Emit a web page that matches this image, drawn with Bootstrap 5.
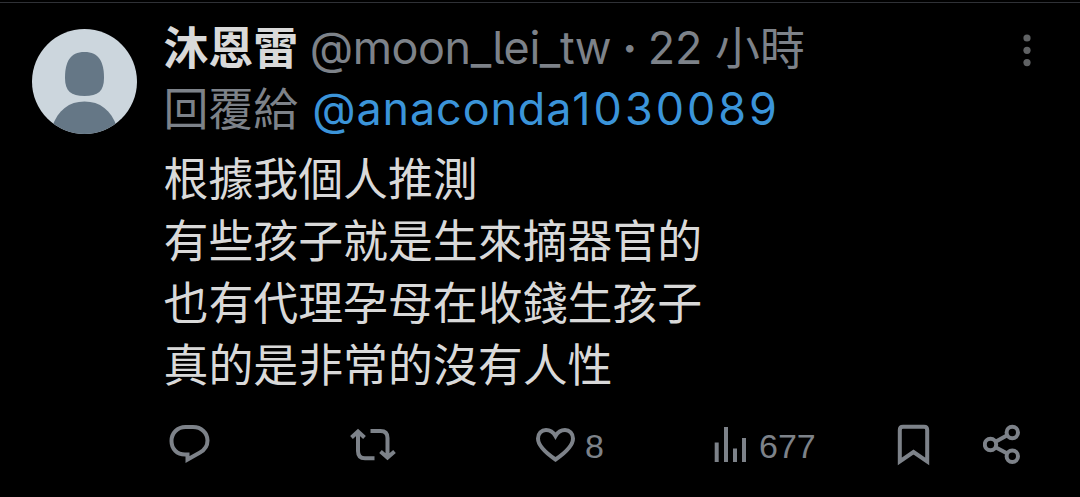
<!DOCTYPE html>
<html lang="zh-Hant">
<head>
  <meta charset="UTF-8">
  <title>沐恩雷</title>
  <meta name="viewport" content="width=device-width, initial-scale=1">
  <!-- Bootstrap CSS -->
  <link href="https://cdn.jsdelivr.net/npm/bootstrap@5.3.3/dist/css/bootstrap.min.css" rel="stylesheet">
  <style>
    body {
      background-color: #000;
      color: #d9d9d9;
      font-family: Inter, "Noto Sans CJK TC", sans-serif;
      font-size: 44.9px;
      overflow: hidden;
    }
    .post {
      height: 497px;
      padding: 15px 49px 0 32px;
      border-top: 1px solid #2f3136;
      margin-top: 2px;
    }
    .avatar {
      width: 105px;
      height: 105px;
      margin: 11px 26.5px 0 0;
    }
    .line {
      height: 61px;
      line-height: 61px;
      white-space: nowrap;
    }
    .grey {
      color: #7d8289;
    }
    .han {
      padding-top: 1px;
    }
    .handle {
      font-feature-settings: "cv05";
      letter-spacing: -0.4px;
      margin-left: 11.500px;
    }
    .dot {
      margin: 0 10.5px 0 11px;
    }
    .reply-to {
      color: #3b94d9;
      text-decoration: none;
      letter-spacing: 0.9px;
      margin-left: 14px;
    }
    .digits {
      letter-spacing: 3px;
    }
    .more {
      margin-top: 16px;
    }
    .post-text {
      line-height: 62px;
      margin-top: 9px;
    }
    .action {
      height: 44px;
      color: #7d8289;
      font: 34px/46px "Liberation Sans", sans-serif;
    }
    .action svg {
      fill: none;
      stroke: currentColor;
      stroke-width: 4;
    }
    .actions {
      margin: 26px 0 0 0.5px;
    }
    .like {
      width: 178px;
    }
    .views {
      width: 183px;
    }
  </style>
</head>
<body>

  <article class="post d-flex align-items-start">
    <svg class="avatar flex-shrink-0 rounded-circle" viewBox="0 0 105 105">
      <rect width="105" height="105" fill="#ccd6dd"/>
      <path d="M52.500 23C67 23 72 33 72 49C72 62 66 67 52.500 67C39 67 33 62 33 49C33 33 38 23 52.500 23Z" fill="#657786"/>
      <path d="M20 98C26 81 37 72.500 52.500 72.500S79 81 85 98V105H20Z" fill="#657786"/>
    </svg>

    <div class="flex-grow-1">
      <div class="d-flex justify-content-between">
        <div class="line d-flex">
          <span class="han fw-bold">沐恩雷</span>
          <span class="handle grey">@moon_lei_tw</span>
          <span class="dot grey fw-bold">·</span>
          <span class="grey">22</span>
          <span class="han grey">&nbsp;小時</span>
        </div>
        <svg class="more" width="8" height="34" fill="#606264">
          <circle cx="4" cy="4" r="3.600"/>
          <circle cx="4" cy="16.300" r="3.600"/>
          <circle cx="4" cy="28.600" r="3.600"/>
        </svg>
      </div>
      <div class="line d-flex">
        <span class="han grey">回覆給</span>
        <a class="reply-to" href="#">@anaconda<span class="digits">1030089</span></a>
      </div>

      <div class="post-text">
        根據我個人推測<br>
        有些孩子就是生來摘器官的<br>
        也有代理孕母在收錢生孩子<br>
        真的是非常的沒有人性
      </div>

      <!-- Actions -->
      <div class="actions d-flex">
        <div class="action d-flex">
          <svg width="186" height="44" viewBox="164 423 186 44">
            <path d="M187.500 454.500H185C177 454.500 171.500 449 171.500 441C171.500 433 177.500 427 185.500 427H193C201.500 427 207.500 433 207.500 440.500C207.500 446 204.500 450 200 452.500L187.500 459.500Z"/>
          </svg>
        </div>
        <div class="action d-flex">
          <svg width="186" height="44" viewBox="350 423 186 44">
            <path d="M351.500 437.500L358 431.500L364.500 437.500M358 432V451Q358 458.300 365 458.300H374.500M370.500 431H380.500Q387.500 431 387.500 438V457M380.500 451.500L387.500 457.500L394.500 451.500"/>
          </svg>
        </div>
        <div class="action like d-flex">
          <svg width="49" height="44" viewBox="536 423 49 44">
            <path d="M555.500 459.500C546 453 538 446 538 438.500C538 433.500 541.500 430 546 430C550.500 430 553.500 432.500 555.500 436C557.500 432.500 560.500 430 565 430C569.500 430 573 433.500 573 438.500C573 446 565 453 555.500 459.500Z"/>
          </svg>
          <span>8</span>
        </div>
        <div class="action views d-flex">
          <svg width="45" height="44" viewBox="714 423 45 44">
            <path d="M716.700 442.500V462M726 427V462M735 448.500V462M744 438V462"/>
          </svg>
          <span>677</span>
        </div>
        <div class="action d-flex">
          <svg width="86" height="44" viewBox="897 423 86 44">
            <path d="M899.800 461.500V430Q899.800 426.800 903 426.800H924Q927.200 426.800 927.200 430V461.500L913.500 452Z"/>
          </svg>
        </div>
        <div class="action d-flex">
          <svg width="40" height="44" viewBox="983 423 40 44">
            <circle cx="990.500" cy="444.500" r="5.700"/>
            <circle cx="1012.300" cy="432.500" r="5.700"/>
            <circle cx="1012.300" cy="456.300" r="5.700"/>
            <path d="M995.500 441.700L1007.300 435.300M995.500 447.300L1007.300 453.600"/>
          </svg>
        </div>
      </div>
    </div>
  </article>

  <!-- Bootstrap Bundle -->
  <script src="https://cdn.jsdelivr.net/npm/bootstrap@5.3.3/dist/js/bootstrap.bundle.min.js"></script>
</body>
</html>
